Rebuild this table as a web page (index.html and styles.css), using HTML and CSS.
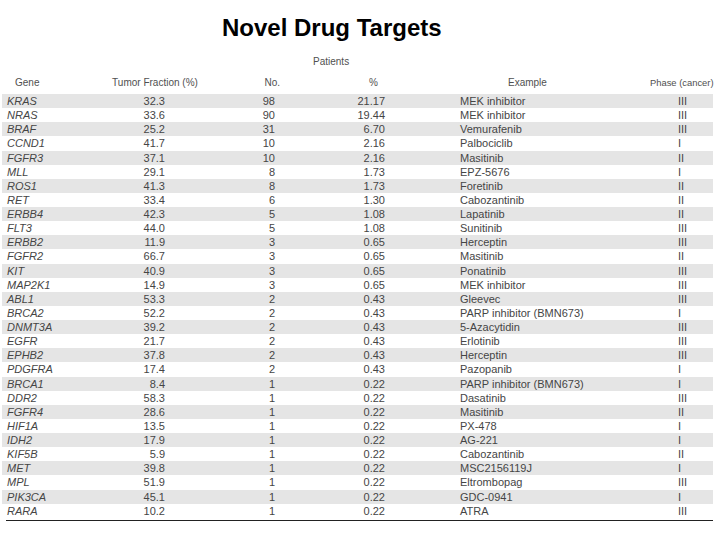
FILE: index.html
```html
<!DOCTYPE html>
<html>
<head>
<meta charset="utf-8">
<link rel="stylesheet" href="styles.css">
</head>
<body>
<h1 class="title">Novel Drug Targets</h1>
<div class="table">
  <div class="group-row"><span class="patients">Patients</span></div>
  <div class="row head">
    <div class="c1">Gene</div><div class="c2">Tumor Fraction (%)</div><div class="c3">No.</div><div class="c4">%</div><div class="c5">Example</div><div class="c6">Phase (cancer)</div>
  </div>
  <div class="row"><div class="c1">KRAS</div><div class="c2">32.3</div><div class="c3">98</div><div class="c4">21.17</div><div class="c5">MEK inhibitor</div><div class="c6">III</div></div>
  <div class="row"><div class="c1">NRAS</div><div class="c2">33.6</div><div class="c3">90</div><div class="c4">19.44</div><div class="c5">MEK inhibitor</div><div class="c6">III</div></div>
  <div class="row"><div class="c1">BRAF</div><div class="c2">25.2</div><div class="c3">31</div><div class="c4">6.70</div><div class="c5">Vemurafenib</div><div class="c6">III</div></div>
  <div class="row"><div class="c1">CCND1</div><div class="c2">41.7</div><div class="c3">10</div><div class="c4">2.16</div><div class="c5">Palbociclib</div><div class="c6">I</div></div>
  <div class="row"><div class="c1">FGFR3</div><div class="c2">37.1</div><div class="c3">10</div><div class="c4">2.16</div><div class="c5">Masitinib</div><div class="c6">II</div></div>
  <div class="row"><div class="c1">MLL</div><div class="c2">29.1</div><div class="c3">8</div><div class="c4">1.73</div><div class="c5">EPZ-5676</div><div class="c6">I</div></div>
  <div class="row"><div class="c1">ROS1</div><div class="c2">41.3</div><div class="c3">8</div><div class="c4">1.73</div><div class="c5">Foretinib</div><div class="c6">II</div></div>
  <div class="row"><div class="c1">RET</div><div class="c2">33.4</div><div class="c3">6</div><div class="c4">1.30</div><div class="c5">Cabozantinib</div><div class="c6">II</div></div>
  <div class="row"><div class="c1">ERBB4</div><div class="c2">42.3</div><div class="c3">5</div><div class="c4">1.08</div><div class="c5">Lapatinib</div><div class="c6">II</div></div>
  <div class="row"><div class="c1">FLT3</div><div class="c2">44.0</div><div class="c3">5</div><div class="c4">1.08</div><div class="c5">Sunitinib</div><div class="c6">III</div></div>
  <div class="row"><div class="c1">ERBB2</div><div class="c2">11.9</div><div class="c3">3</div><div class="c4">0.65</div><div class="c5">Herceptin</div><div class="c6">III</div></div>
  <div class="row"><div class="c1">FGFR2</div><div class="c2">66.7</div><div class="c3">3</div><div class="c4">0.65</div><div class="c5">Masitinib</div><div class="c6">II</div></div>
  <div class="row"><div class="c1">KIT</div><div class="c2">40.9</div><div class="c3">3</div><div class="c4">0.65</div><div class="c5">Ponatinib</div><div class="c6">III</div></div>
  <div class="row"><div class="c1">MAP2K1</div><div class="c2">14.9</div><div class="c3">3</div><div class="c4">0.65</div><div class="c5">MEK inhibitor</div><div class="c6">III</div></div>
  <div class="row"><div class="c1">ABL1</div><div class="c2">53.3</div><div class="c3">2</div><div class="c4">0.43</div><div class="c5">Gleevec</div><div class="c6">III</div></div>
  <div class="row"><div class="c1">BRCA2</div><div class="c2">52.2</div><div class="c3">2</div><div class="c4">0.43</div><div class="c5">PARP inhibitor (BMN673)</div><div class="c6">I</div></div>
  <div class="row"><div class="c1">DNMT3A</div><div class="c2">39.2</div><div class="c3">2</div><div class="c4">0.43</div><div class="c5">5-Azacytidin</div><div class="c6">III</div></div>
  <div class="row"><div class="c1">EGFR</div><div class="c2">21.7</div><div class="c3">2</div><div class="c4">0.43</div><div class="c5">Erlotinib</div><div class="c6">III</div></div>
  <div class="row"><div class="c1">EPHB2</div><div class="c2">37.8</div><div class="c3">2</div><div class="c4">0.43</div><div class="c5">Herceptin</div><div class="c6">III</div></div>
  <div class="row"><div class="c1">PDGFRA</div><div class="c2">17.4</div><div class="c3">2</div><div class="c4">0.43</div><div class="c5">Pazopanib</div><div class="c6">I</div></div>
  <div class="row"><div class="c1">BRCA1</div><div class="c2">8.4</div><div class="c3">1</div><div class="c4">0.22</div><div class="c5">PARP inhibitor (BMN673)</div><div class="c6">I</div></div>
  <div class="row"><div class="c1">DDR2</div><div class="c2">58.3</div><div class="c3">1</div><div class="c4">0.22</div><div class="c5">Dasatinib</div><div class="c6">III</div></div>
  <div class="row"><div class="c1">FGFR4</div><div class="c2">28.6</div><div class="c3">1</div><div class="c4">0.22</div><div class="c5">Masitinib</div><div class="c6">II</div></div>
  <div class="row"><div class="c1">HIF1A</div><div class="c2">13.5</div><div class="c3">1</div><div class="c4">0.22</div><div class="c5">PX-478</div><div class="c6">I</div></div>
  <div class="row"><div class="c1">IDH2</div><div class="c2">17.9</div><div class="c3">1</div><div class="c4">0.22</div><div class="c5">AG-221</div><div class="c6">I</div></div>
  <div class="row"><div class="c1">KIF5B</div><div class="c2">5.9</div><div class="c3">1</div><div class="c4">0.22</div><div class="c5">Cabozantinib</div><div class="c6">II</div></div>
  <div class="row"><div class="c1">MET</div><div class="c2">39.8</div><div class="c3">1</div><div class="c4">0.22</div><div class="c5">MSC2156119J</div><div class="c6">I</div></div>
  <div class="row"><div class="c1">MPL</div><div class="c2">51.9</div><div class="c3">1</div><div class="c4">0.22</div><div class="c5">Eltrombopag</div><div class="c6">III</div></div>
  <div class="row"><div class="c1">PIK3CA</div><div class="c2">45.1</div><div class="c3">1</div><div class="c4">0.22</div><div class="c5">GDC-0941</div><div class="c6">I</div></div>
  <div class="row"><div class="c1">RARA</div><div class="c2">10.2</div><div class="c3">1</div><div class="c4">0.22</div><div class="c5">ATRA</div><div class="c6">III</div></div>
  <div class="rule"></div>
</div>
</body>
</html>
```

FILE: styles.css
```css
html, body {
  margin: 0;
  padding: 0;
  background: #ffffff;
}
body {
  font-family: "Liberation Sans", Arial, Helvetica, sans-serif;
  color: #454545;
}
.title {
  margin: 0;
  padding: 13px 0 0 222px;
  font-size: 24px;
  line-height: 30px;
  font-weight: bold;
  color: #000;
}
.table {
  margin: 12px 0 0 2px;
  width: 711px;
}
.group-row {
  display: grid;
  grid-template-columns: 98px 110px 90px 120px 230px 63px;
  height: 14px;
  line-height: 14px;
  font-size: 10px;
  color: #505050;
}
.patients {
  grid-column: 3 / 5;
  padding-left: 103px;
}
.row {
  display: grid;
  grid-template-columns: 98px 110px 90px 120px 230px 63px;
  height: 14.14px;
  line-height: 14.14px;
  font-size: 11px;
  white-space: nowrap;
}
.row:nth-child(odd) {
  background: #e5e5e5;
}
.row.head {
  background: none;
  height: 14px;
  line-height: 14px;
  margin: 7px 0 4px;
  font-size: 10px;
  color: #505050;
}
.c1 { padding-left: 5px; font-style: italic; }
.c2 { text-align: right; padding-right: 45px; }
.c3 { text-align: right; padding-right: 25px; }
.c4 { text-align: right; padding-right: 35px; }
.c5 { padding-left: 40px; }
.c6 { padding-left: 28px; }
.head .c1 { padding-left: 13px; font-style: normal; }
.head .c2 { text-align: center; padding-right: 0; }
.head .c3 { padding-right: 20px; }
.head .c4 { padding-right: 42px; }
.head .c5 { padding-left: 88px; }
.head .c6 { padding-left: 0; font-size: 9.4px; }
.rule {
  margin: 2px 0 0 4px;
  height: 0;
  border-top: 1px solid #222;
}
```
